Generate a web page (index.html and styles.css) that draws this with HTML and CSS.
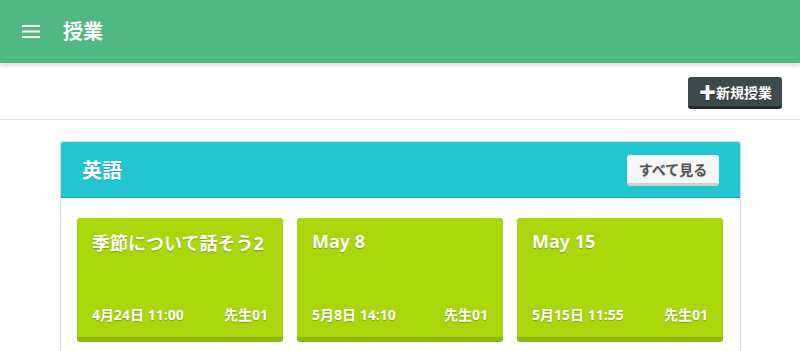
FILE: index.html
```html
<!DOCTYPE html>
<html lang="ja">
<head>
    <meta charset="UTF-8">
    <title>授業</title>
    <link rel="stylesheet" href="styles.css">
</head>
<body>
    <header class="appbar">
        <span class="menu-icon">
            <svg width="18" height="13" viewBox="0 0 18 13"><rect y="0" width="18" height="2" fill="#fff"/><rect y="5.5" width="18" height="2" fill="#fff"/><rect y="11" width="18" height="2" fill="#fff"/></svg>
        </span>
        <h1 class="appbar-title">授業</h1>
    </header>

    <div class="toolbar">
        <button class="btn-new"><span class="plus">✚</span>新規授業</button>
    </div>

    <div class="content">
        <div class="panel">
            <div class="panel-head">
                <h2>英語</h2>
                <button class="btn-all">すべて見る</button>
            </div>
            <div class="panel-body">
                <div class="lesson">
                    <p class="lesson-title">季節について話そう2</p>
                    <div class="lesson-meta">
                        <span>4月24日 11:00</span>
                        <span>先生01</span>
                    </div>
                </div>
                <div class="lesson">
                    <p class="lesson-title">May 8</p>
                    <div class="lesson-meta">
                        <span>5月8日 14:10</span>
                        <span>先生01</span>
                    </div>
                </div>
                <div class="lesson">
                    <p class="lesson-title">May 15</p>
                    <div class="lesson-meta">
                        <span>5月15日 11:55</span>
                        <span>先生01</span>
                    </div>
                </div>
            </div>
        </div>
    </div>
</body>
</html>
```

FILE: styles.css
```css
* {
    margin: 0;
    padding: 0;
    box-sizing: border-box;
    font-family: "Open Sans", "Noto Sans CJK JP", sans-serif;
}

body {
    background: #fff;
    color: #333;
    overflow: hidden;
}

.appbar {
    height: 63px;
    background: #50b881;
    display: flex;
    align-items: center;
    padding-left: 22px;
    box-shadow: 0 2px 5px rgba(0, 0, 0, 0.18);
    position: relative;
}

.menu-icon {
    display: flex;
    width: 18px;
    margin-right: 23px;
}

.appbar-title {
    color: #fff;
    font-size: 20px;
    font-weight: bold;
    line-height: 1;
}

.toolbar {
    height: 57px;
    border-bottom: 1px solid #ddd;
    display: flex;
    justify-content: flex-end;
    align-items: flex-start;
    padding: 14px 18px 0 0;
}

.btn-new {
    height: 32px;
    padding: 0 10px 0 11px;
    background: #3c4a4b;
    border: none;
    border-bottom: 3px solid #222b2b;
    border-radius: 3px;
    color: #fff;
    font-size: 14px;
    font-weight: bold;
    display: flex;
    align-items: center;
    text-shadow: 0 1px 1px rgba(0, 0, 0, 0.3);
}

.plus {
    font-size: 17px;
    margin-right: 0;
}

.content {
    padding: 21px 59px 0 60px;
}

.panel {
    border: 1px solid #d8d8d8;
    border-radius: 3px;
    height: 240px;
}

.panel-head {
    height: 56px;
    background: #22c6d3;
    border-bottom: 1px solid #1ba9b4;
    border-radius: 2px 2px 0 0;
    display: flex;
    align-items: center;
    justify-content: space-between;
    padding: 0 21px 0 21px;
}

.panel-head h2 {
    color: #fff;
    font-size: 20px;
    font-weight: bold;
    text-shadow: 0 1px 1px rgba(0, 0, 0, 0.15);
}

.btn-all {
    height: 31px;
    width: 92px;
    background: #f7f7f7;
    border: none;
    border-bottom: 3px solid #cfcfcf;
    border-radius: 3px;
    color: #555;
    font-size: 14px;
    font-weight: bold;
    margin-top: 2px;
    text-shadow: 0 1px 1px rgba(0, 0, 0, 0.15);
}

.panel-body {
    display: flex;
    gap: 14px;
    padding: 20px 16px;
}

.lesson {
    width: 206px;
    height: 124px;
    background: #a8d80c;
    border-bottom: 5px solid #8cb808;
    border-radius: 3px;
    padding: 11px 15px 0 15px;
    display: flex;
    flex-direction: column;
    justify-content: space-between;
    color: #fff;
    text-shadow: 0 1px 1px rgba(0, 0, 0, 0.25);
}

.lesson-title {
    font-size: 18px;
    font-weight: bold;
}

.lesson-meta {
    display: flex;
    justify-content: space-between;
    font-size: 14px;
    font-weight: bold;
    padding-bottom: 13px;
}
```
